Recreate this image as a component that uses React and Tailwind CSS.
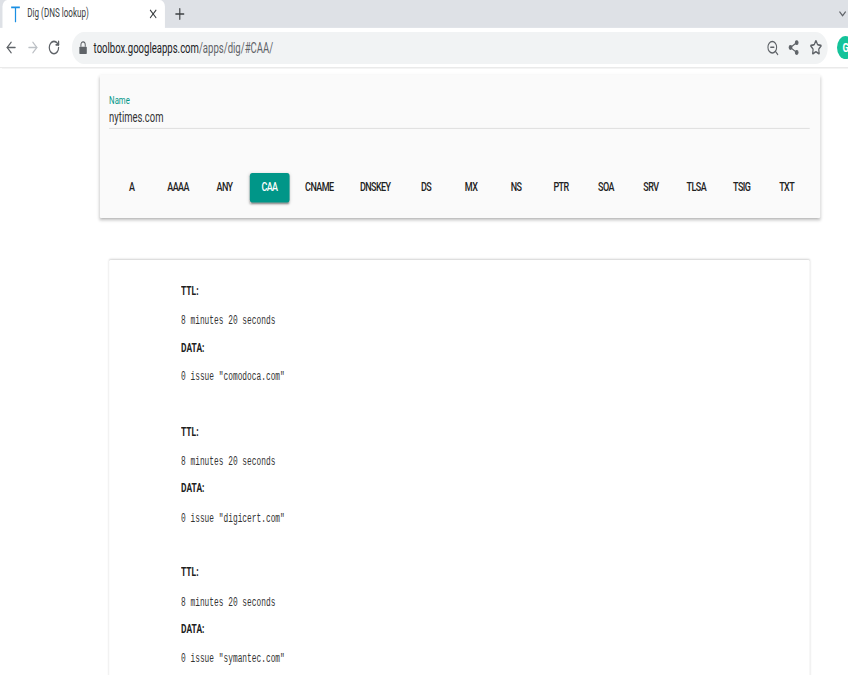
import { ArrowLeft, ArrowRight, ChevronDown, Plus, RotateCw, Star, X, ZoomOut } from "lucide-react";

const types = ["A", "AAAA", "ANY", "CAA", "CNAME", "DNSKEY", "DS", "MX", "NS", "PTR", "SOA", "SRV", "TLSA", "TSIG", "TXT"];
const records = ["comodoca.com", "digicert.com", "symantec.com"];

function Heading({ children }) {
    return (
        <div className="h-[34.4px] leading-[34.4px] font-['Roboto',sans-serif] text-[15.5px] font-bold text-[#212121]">
            <span className="inline-block origin-left scale-x-[0.88]">{children}</span>
        </div>
    );
}

function Value({ children }) {
    return (
        <div className="h-[34.4px] pt-[3px] leading-[34.4px] font-['Liberation_Mono',monospace] text-[15px] text-[#333]">
            <span className="inline-block origin-left scale-x-[0.845] whitespace-pre">{children}</span>
        </div>
    );
}

function Record({ issuer }) {
    return (
        <div className="mb-[34px] flex flex-col">
            <Heading>TTL:</Heading>
            <Value>8 minutes 20 seconds</Value>
            <Heading>DATA:</Heading>
            <Value>0 issue "{issuer}"</Value>
        </div>
    );
}

export default function App() {
    return (
        <div className="w-[848px] h-[675px] overflow-hidden bg-white">
            {/* the reference is a wide page squeezed into this window */}
            <div className="w-[1368px] h-[823px] origin-top-left scale-x-[0.62] scale-y-[0.82] font-['Roboto',sans-serif]">
                <div className="h-[34px] bg-[#dee1e6] flex items-center pl-[4px]">
                    <div className="h-[34px] w-[262px] bg-white rounded-t-[8px] flex items-center pl-[12px] pr-[10px] text-[#3c4043]">
                        <svg width="20" height="22" viewBox="0 0 20 22" fill="none" stroke="#1a8fe3" strokeWidth="2">
                            <path d="M2 3h14M9 3v18" />
                        </svg>
                        <span className="ml-[8px] flex-1 text-[14.5px]">
                            <span className="inline-block origin-left scale-x-[0.9] whitespace-pre">Dig (DNS lookup)</span>
                        </span>
                        <X size={18} strokeWidth={2.2} />
                    </div>
                    <Plus size={22} strokeWidth={2} className="ml-[13px] text-[#3c4043]" />
                    <ChevronDown size={18} strokeWidth={2.4} className="ml-auto mr-[0px] text-[#5f6368]" />
                </div>

                <div className="h-[49px] flex items-center border-b border-[#e4e4e4] shadow-[0_1px_1px_rgba(0,0,0,0.04)]">
                    <ArrowLeft size={22} className="ml-[7px] shrink-0 text-[#5f6368]" />
                    <ArrowRight size={22} className="ml-[13px] shrink-0 text-[#bdc1c6]" />
                    <RotateCw size={20} strokeWidth={2.4} className="ml-[13px] shrink-0 text-[#5f6368]" />
                    <div className="ml-[19px] w-[1219px] h-[39px] bg-[#f1f3f4] rounded-full flex items-center pl-[11px] pr-[9px] shrink-0">
                        <svg width="14" height="17" viewBox="0 0 14 17" fill="#5f6368">
                            <path d="M2 7h10a1 1 0 0 1 1 1v7a1 1 0 0 1-1 1H2a1 1 0 0 1-1-1V8a1 1 0 0 1 1-1z" />
                            <path d="M3.5 7V4.5a3.5 3.5 0 0 1 7 0V7" fill="none" stroke="#5f6368" strokeWidth="1.6" />
                        </svg>
                        <span className="ml-[10px] text-[18px] text-[#202124]">
                            <span className="inline-block origin-left scale-x-[0.855] whitespace-pre">
                                toolbox.googleapps.com<span className="text-[#5f6368]">/apps/dig/#CAA/</span>
                            </span>
                        </span>
                        <ZoomOut size={21} className="ml-auto text-[#5f6368]" />
                        <svg width="20" height="20" viewBox="0 0 20 20" fill="#5f6368" stroke="#5f6368" strokeWidth="1.6" className="ml-[13px]">
                            <path d="M15 4L5 10l10 6" fill="none" />
                            <circle cx="15" cy="4" r="2.2" />
                            <circle cx="5" cy="10" r="2.2" />
                            <circle cx="15" cy="16" r="2.2" />
                        </svg>
                        <Star size={20} strokeWidth={2.4} className="ml-[16px] text-[#5f6368]" />
                    </div>
                    <div className="ml-[15px] w-[28px] h-[28px] rounded-full bg-[#15c39a] text-white text-[15px] font-bold flex items-center justify-center shrink-0">
                        G
                    </div>
                </div>

                <div className="mt-[8px] ml-[161px] w-[1162px] h-[175px] bg-[#fafafa] rounded-[2px] pl-[15px] pr-[17px] pt-[24px] shadow-[0_3px_3px_-2px_rgba(0,0,0,0.25),0_3px_4px_0_rgba(0,0,0,0.14),0_1px_5px_0_rgba(0,0,0,0.06)]">
                    <div className="text-[12.5px] leading-[16px] text-[#009688]">Name</div>
                    <div className="h-[26px] text-[17.5px] leading-[24px] text-[#333] border-b border-[#d8d8d8]">
                        <span className="inline-block origin-left scale-x-[0.87] whitespace-pre">nytimes.com</span>
                    </div>
                    <div className="mt-[54px] flex">
                        {types.map((type) => (
                            <button
                                key={type}
                                className={`mx-[4.25px] h-[36px] min-w-[64px] px-[17px] rounded-[4px] text-[14.5px] tracking-[-0.9px] font-medium ${
                                    type === "CAA"
                                        ? "bg-[#009688] text-white shadow-[0_3px_1px_-2px_rgba(0,0,0,0.2),0_2px_2px_0_rgba(0,0,0,0.14),0_1px_5px_0_rgba(0,0,0,0.12)]"
                                        : "text-[#212121]"
                                }`}
                            >
                                {type}
                            </button>
                        ))}
                    </div>
                </div>

                <div className="mt-[51px] ml-[176px] w-[1130px] h-[600px] bg-white rounded-[2px] pt-[21px] pl-[116px] shadow-[0_0_3px_rgba(0,0,0,0.18)]">
                    {records.map((issuer) => (
                        <Record key={issuer} issuer={issuer} />
                    ))}
                </div>
            </div>
        </div>
    );
}
